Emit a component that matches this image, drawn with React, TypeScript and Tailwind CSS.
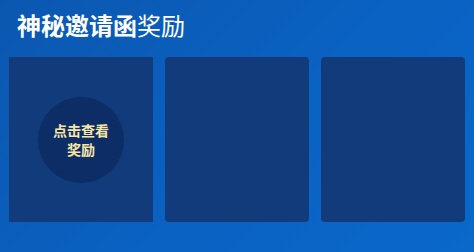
const cards = [0, 1, 2];

export default function App() {
  return (
    <main
      className="h-[252px] w-[474px] overflow-hidden bg-[linear-gradient(135deg,#0b57b0_0%,#0a62c2_55%,#0a68cb_100%)] px-[9px] pt-[10px]"
      style={{ fontFamily: '"Noto Sans CJK SC", "Noto Sans", sans-serif' }}
    >
      <h1 className="pl-[8px] text-[24px] leading-[30px] text-white">
        <span className="font-bold">神秘邀请函</span>
        <span>奖励</span>
      </h1>

      <div className="mt-[17px] grid grid-cols-3 gap-[12px]">
        {cards.map((i) => (
          <div
            key={i}
            className={`flex h-[165px] items-center justify-center bg-[#123b7b] ${
              i === 0 ? "" : "rounded-[4px]"
            }`}
          >
            {i === 0 && (
              <button className="flex h-[86px] w-[86px] flex-col items-center justify-center rounded-full bg-[#0c2d66] text-[14px] font-bold leading-[19px] text-[#f8e7a4]">
                <span>点击查看</span>
                <span>奖励</span>
              </button>
            )}
          </div>
        ))}
      </div>
    </main>
  );
}
